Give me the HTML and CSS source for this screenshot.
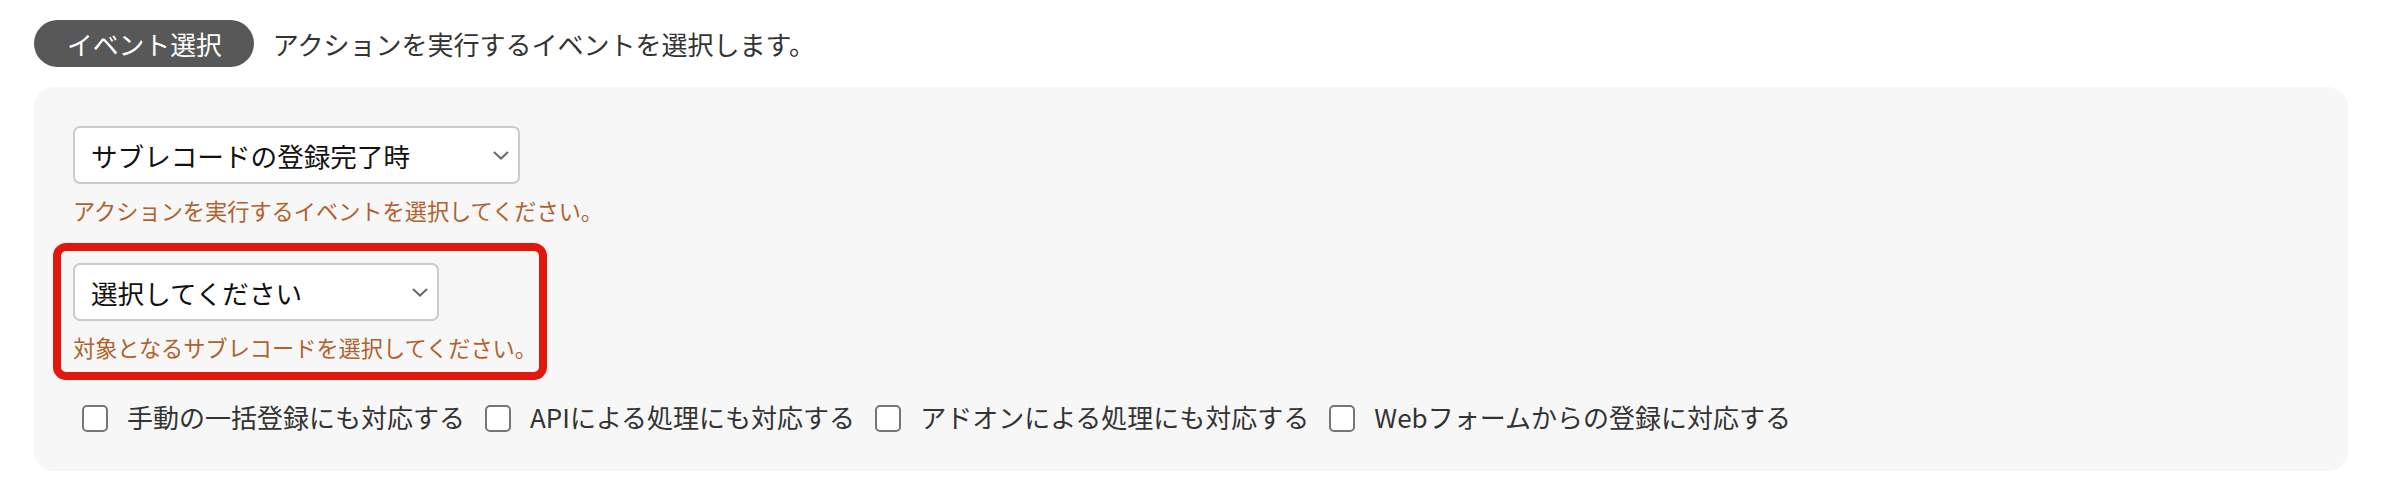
FILE: index.html
```html
<!DOCTYPE html>
<html lang="ja">
<head>
<meta charset="utf-8">
<title>イベント選択</title>
<link rel="stylesheet" href="styles.css">
</head>
<body>
<div class="header">
  <span class="badge">イベント選択</span>
  <span class="lead">アクションを実行するイベントを選択します。</span>
</div>
<div class="panel">
  <div class="field">
    <div class="select-wrap w1">
      <select class="select">
        <option>サブレコードの登録完了時</option>
      </select>
      <svg class="chev" width="16" height="9" viewBox="0 0 16 9"><path d="M1 1 L8 7.6 L15 1" fill="none" stroke="#6a6a6a" stroke-width="2"/></svg>
    </div>
    <p class="help">アクションを実行するイベントを選択してください。</p>
  </div>
  <div class="field field-hl">
    <div class="select-wrap w2">
      <select class="select">
        <option>選択してください</option>
      </select>
      <svg class="chev" width="16" height="9" viewBox="0 0 16 9"><path d="M1 1 L8 7.6 L15 1" fill="none" stroke="#6a6a6a" stroke-width="2"/></svg>
    </div>
    <p class="help">対象となるサブレコードを選択してください。</p>
    <span class="hl-frame"></span>
  </div>
  <div class="checks">
    <label class="check"><input type="checkbox"><span>手動の一括登録にも対応する</span></label>
    <label class="check"><input type="checkbox"><span>APIによる処理にも対応する</span></label>
    <label class="check"><input type="checkbox"><span>アドオンによる処理にも対応する</span></label>
    <label class="check"><input type="checkbox"><span>Webフォームからの登録に対応する</span></label>
  </div>
</div>
</body>
</html>
```
FILE: styles.css
```css
html, body {
  margin: 0;
  padding: 0;
  background: #ffffff;
}
body {
  font-family: "Noto Sans CJK JP", "Noto Sans", sans-serif;
  color: #333333;
}
.header {
  display: flex;
  align-items: center;
  gap: 19px;
  padding: 20px 0 0 34px;
}
.badge {
  display: inline-block;
  height: 47px;
  line-height: 47px;
  padding: 0 32px 0 33px;
  background: #585858;
  color: #ffffff;
  border-radius: 24px;
  font-size: 25.8px;
}
.lead {
  font-size: 26px;
  line-height: 47px;
  color: #333333;
}
.panel {
  margin: 20px 34px 0 34px;
  padding: 39px 39px 36px 39px;
  background: #f7f7f7;
  border-radius: 20px;
}
.field {
  display: flex;
  flex-direction: column;
  align-items: flex-start;
}
.field-hl {
  position: relative;
  margin-top: 37px;
  width: max-content;
}
.select-wrap {
  position: relative;
  height: 58px;
}
.w1 { width: 447px; }
.w2 { width: 366px; }
.select {
  appearance: none;
  -webkit-appearance: none;
  box-sizing: border-box;
  width: 100%;
  height: 100%;
  margin: 0;
  padding: 0 40px 0 16px;
  background: #ffffff;
  border: 2px solid #cbcbcb;
  border-radius: 7px;
  font-family: "Noto Sans CJK JP", "Noto Sans", sans-serif;
  font-size: 26.6px;
  color: #111111;
  outline: none;
}
.chev {
  position: absolute;
  right: 11px;
  top: 25px;
  pointer-events: none;
}
.help {
  margin: 10px 0 0 0;
  font-size: 22.2px;
  line-height: 32px;
  color: #b0612d;
}
.hl-frame {
  position: absolute;
  left: -20px;
  top: -20px;
  width: 494px;
  height: 137px;
  box-sizing: border-box;
  border: 8px solid #e2180e;
  border-radius: 13px;
  pointer-events: none;
}
.checks {
  display: flex;
  align-items: center;
  margin-top: 36px;
  padding-left: 9px;
  gap: 20px;
  height: 36px;
}
.check {
  display: flex;
  align-items: center;
  gap: 19px;
  font-size: 26px;
  line-height: 36px;
  color: #333333;
}
.check input {
  appearance: none;
  -webkit-appearance: none;
  box-sizing: border-box;
  width: 26px;
  height: 27px;
  margin: 3px 0 0 0;
  background: #ffffff;
  border: 2px solid #767676;
  border-radius: 5px;
}
```
